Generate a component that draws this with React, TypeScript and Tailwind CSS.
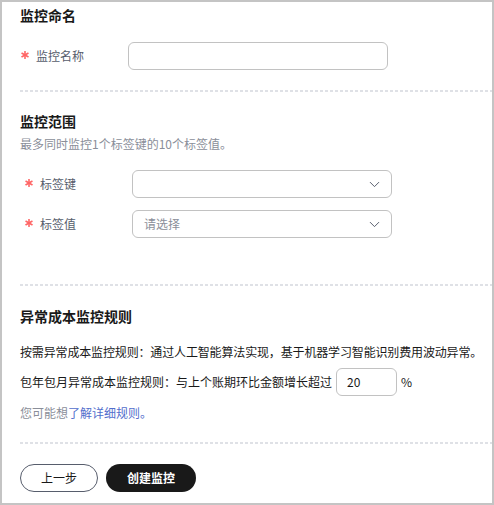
import { ChevronDown } from 'lucide-react';

const font = { fontFamily: '"Noto Sans CJK SC", "Noto Sans", sans-serif' };

function Dashed({ className = '' }: { className?: string }) {
  return (
    <div
      className={`h-[2px] bg-[linear-gradient(to_right,#dfe1e6_3px,transparent_3px)] bg-[length:5px_2px] ${className}`}
    />
  );
}

function Star() {
  return (
    <svg width="8" height="8" viewBox="0 0 8 8" className="mb-[2px] ml-[1px] mr-[7px] shrink-0">
      <g stroke="#f66" strokeWidth="1.6" strokeLinecap="round">
        <line x1="4" y1="0.6" x2="4" y2="7.4" />
        <line x1="1" y1="2.3" x2="7" y2="5.7" />
        <line x1="1" y1="5.7" x2="7" y2="2.3" />
      </g>
    </svg>
  );
}

function Label({ text }: { text: string }) {
  return (
    <div className="flex items-center text-[12px] leading-[18px] text-[#575d6c]">
      <Star />
      <span>{text}</span>
    </div>
  );
}

function Select({ placeholder }: { placeholder?: string }) {
  return (
    <div className="flex h-[28px] w-[260px] items-center justify-between rounded-[6px] border border-[#c2c2c2] bg-white pl-[11px] pr-[8px]">
      <span className="text-[12px] text-[#8a8e99]">{placeholder}</span>
      <ChevronDown className="h-[17px] w-[17px] text-[#575d6c]" strokeWidth={1.4} />
    </div>
  );
}

export default function App() {
  return (
    <div
      style={font}
      className="h-[505px] w-[494px] border-2 border-[#c4c4c4] bg-white pl-[18px] text-[#191919]"
    >
      {/* 监控命名 */}
      <h2 className="mt-[3px] text-[14px] font-bold leading-[20px]">监控命名</h2>
      <div className="mt-[17px] flex items-center">
        <div className="w-[108px]">
          <Label text="监控名称" />
        </div>
        <div className="h-[28px] w-[260px] rounded-[6px] border border-[#c2c2c2] bg-white" />
      </div>
      <Dashed className="mt-[20px]" />

      {/* 监控范围 */}
      <h2 className="mt-[19px] text-[14px] font-bold leading-[20px]">监控范围</h2>
      <p className="mt-[4px] text-[12px] leading-[18px] text-[#8a8e99]">
        最多同时监控1个标签键的10个标签值。
      </p>
      <div className="mt-[17px] flex flex-col gap-[12px] pl-[4px]">
        <div className="flex items-center">
          <div className="w-[108px]">
            <Label text="标签键" />
          </div>
          <Select />
        </div>
        <div className="flex items-center">
          <div className="w-[108px]">
            <Label text="标签值" />
          </div>
          <Select placeholder="请选择" />
        </div>
      </div>
      <Dashed className="mt-[46px]" />

      {/* 异常成本监控规则 */}
      <h2 className="mt-[20px] text-[14px] font-bold leading-[20px]">异常成本监控规则</h2>
      <p className="mt-[17px] whitespace-nowrap text-[12px] leading-[18px] tracking-[-0.15px]">
        按需异常成本监控规则：通过人工智能算法实现，基于机器学习智能识别费用波动异常。
      </p>
      <div className="mt-[7px] flex items-center text-[12px] leading-[18px]">
        <span>包年包月异常成本监控规则：与上个账期环比金额增长超过</span>
        <div className="ml-[4px] flex h-[28px] w-[61px] items-center rounded-[6px] border border-[#c2c2c2] pl-[10px]">
          20
        </div>
        <span className="ml-[4px]">%</span>
      </div>
      <p className="mt-[8px] text-[12px] leading-[18px] text-[#8a8e99]">
        您可能想<span className="text-[#526ecc]">了解详细规则。</span>
      </p>
      <Dashed className="mt-[20px]" />

      <div className="mt-[20px] flex gap-[8px]">
        <button className="h-[28px] w-[78px] rounded-full border border-[#575d6c] bg-white text-[12px] text-[#191919]">
          上一步
        </button>
        <button className="h-[28px] w-[90px] rounded-full bg-[#191919] text-[12px] font-bold text-white">
          创建监控
        </button>
      </div>
    </div>
  );
}
